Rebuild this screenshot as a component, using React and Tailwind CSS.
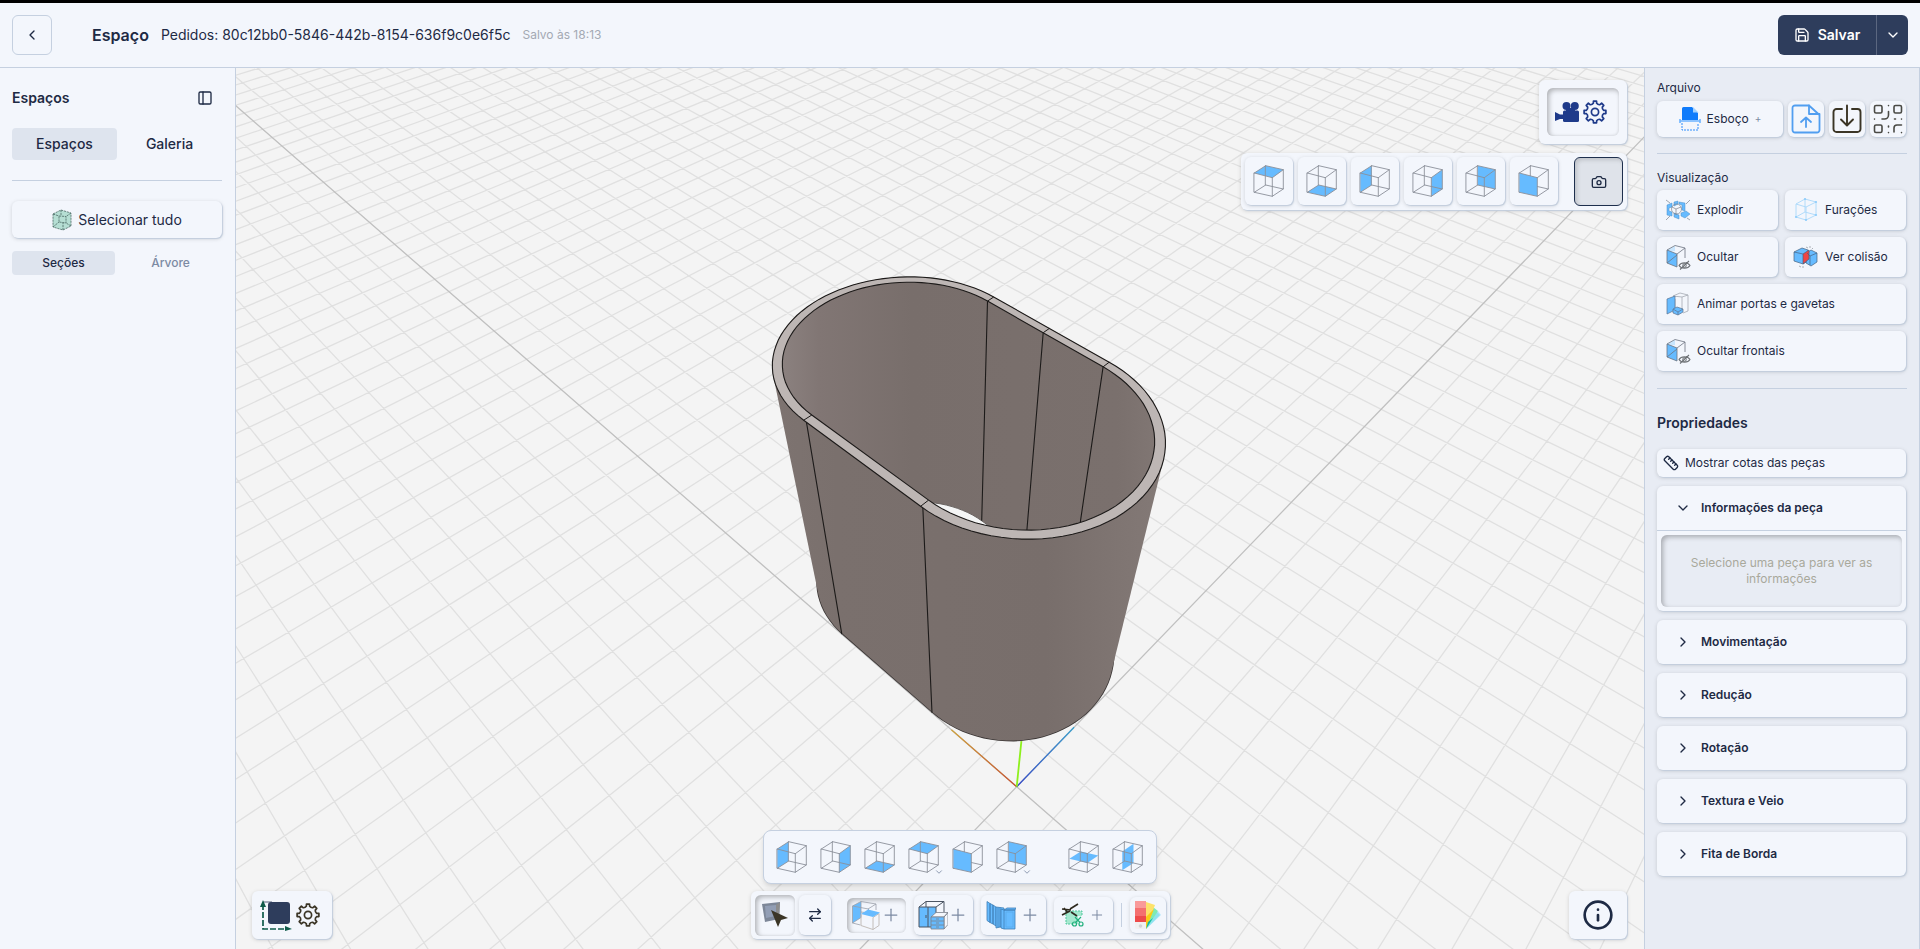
import React from 'react';
import { ArrowRightLeft, Camera, ChevronDown, ChevronLeft, ChevronRight, Info, PanelLeft, Plus, Ruler, Save } from 'lucide-react';

/* ---------- Scene projection ---------- */

// Vanishing points of the two floor axes and of the vertical, plus the world origin
const ORIGIN = [1016.7, 786.7];
const VP_A = [-531, -563];
const VP_B = [2320, -563];
const VP_UP = [960, 1343];
const STEP_A = 0.02317;
const STEP_B = 0.02426;
const STEP_UP = 0.0379;

const weight = (a, b, h = 0) => 1 + a * STEP_A + b * STEP_B - h * STEP_UP;

const project = (a, b, h = 0) => {
  const w = weight(a, b, h);
  return [0, 1].map((i) => (ORIGIN[i] + a * STEP_A * VP_A[i] + b * STEP_B * VP_B[i] - h * STEP_UP * VP_UP[i]) / w);
};

const toPath = (points, close = true) =>
  points.map(([x, y], i) => `${i ? 'L' : 'M'}${x.toFixed(1)} ${y.toFixed(1)}`).join('') + (close ? 'Z' : '');

const gridPath = () => {
  let d = '';
  for (let k = -30; k <= 75; k++) {
    if (k === 0) continue;
    // keep every line in front of the camera
    const startB = Math.max(-45, (0.2 - 1 - k * STEP_A) / STEP_B);
    const startA = Math.max(-45, (0.2 - 1 - k * STEP_B) / STEP_A);
    d += toPath([project(k, startB), project(k, 90)], false);
    d += toPath([project(startA, k), project(90, k)], false);
  }
  return d;
};

const axesPath = toPath([project(-25, 0), project(90, 0)], false) + toPath([project(0, -25), project(0, 90)], false);

// Oblong piece: 8 x 5 floor cells, rounded ends
const HEIGHT = 6.93;
const EDGE = 0.05;
const WALL = 0.14;

const oblong = (inset, h) => {
  const r = 2.5 - inset;
  const points = [];
  for (let i = 0; i <= 48; i++) {
    const t = Math.PI / 2 + (Math.PI * i) / 48;
    points.push(project(2.5 + r * Math.cos(t), 2.5 + r * Math.sin(t), h));
  }
  for (let i = 0; i <= 48; i++) {
    const t = -Math.PI / 2 + (Math.PI * i) / 48;
    points.push(project(5.5 + r * Math.cos(t), 2.5 + r * Math.sin(t), h));
  }
  return points;
};

const hull = (points) => {
  const sorted = [...points].sort((p, q) => p[0] - q[0] || p[1] - q[1]);
  const cross = (o, p, q) => (p[0] - o[0]) * (q[1] - o[1]) - (p[1] - o[1]) * (q[0] - o[0]);
  const half = (list) => {
    const out = [];
    list.forEach((p) => {
      while (out.length > 1 && cross(out[out.length - 2], out[out.length - 1], p) <= 0) out.pop();
      out.push(p);
    });
    return out.slice(0, -1);
  };
  return [...half(sorted), ...half(sorted.reverse())];
};

const outerTop = oblong(-EDGE, HEIGHT);
const outerBottom = oblong(0.02, 0);
const innerTop = toPath(oblong(WALL, HEIGHT));
const innerBottom = toPath(oblong(WALL, 0));
const body = toPath(hull([...outerTop, ...outerBottom]));
const rim = toPath(outerTop) + innerTop;

const seam = (a, b) => toPath([project(a, b, HEIGHT), project(a, b, 0)], false);
const rimSeam = (a, b1, b2) => toPath([project(a, b1, HEIGHT), project(a, b2, HEIGHT)], false);

const Scene = () => (
  <svg className="absolute inset-0 h-full w-full" viewBox="236 68 1408 881" preserveAspectRatio="xMidYMid slice" aria-hidden="true">
    <defs>
      <linearGradient id="outside" gradientUnits="userSpaceOnUse" x1="780" y1="0" x2="1160" y2="0">
        <stop offset="0" stopColor="#7d7370" />
        <stop offset="0.15" stopColor="#7a706d" />
        <stop offset="0.7" stopColor="#786e6b" />
        <stop offset="1" stopColor="#837976" />
      </linearGradient>
      <linearGradient id="inside" gradientUnits="userSpaceOnUse" x1="782" y1="0" x2="1154" y2="0">
        <stop offset="0" stopColor="#8b817f" />
        <stop offset="0.1" stopColor="#817674" />
        <stop offset="0.35" stopColor="#786e6b" />
        <stop offset="0.9" stopColor="#7a706d" />
        <stop offset="1" stopColor="#807673" />
      </linearGradient>
      <linearGradient id="axisX" gradientUnits="userSpaceOnUse" x1="1016" y1="786" x2="948" y2="727">
        <stop offset="0" stopColor="#c8502c" />
        <stop offset="1" stopColor="#cfa63c" />
      </linearGradient>
      <linearGradient id="axisZ" gradientUnits="userSpaceOnUse" x1="1016" y1="786" x2="1077" y2="724">
        <stop offset="0" stopColor="#3448c8" />
        <stop offset="1" stopColor="#3ba6cf" />
      </linearGradient>
      <clipPath id="opening">
        <path d={innerTop} />
      </clipPath>
    </defs>
    <path d={gridPath()} stroke="#e0e0e0" strokeWidth="1.3" fill="none" />
    <path d={axesPath} stroke="#c0c0c0" strokeWidth="1.3" fill="none" />
    <path d={toPath([project(0, 0), project(1.9, 0)], false)} stroke="url(#axisX)" strokeWidth="1.3" />
    <path d={toPath([project(0, 0), project(0, 1.9)], false)} stroke="url(#axisZ)" strokeWidth="1.3" />
    <path d={toPath([project(0, 0), project(0, 0, 2)], false)} stroke="#8df01c" strokeWidth="1.8" />
    <path d={toPath(outerBottom)} stroke="#3a3534" strokeWidth="1.6" fill="none" />
    <path d={body} fill="url(#outside)" />
    <path d={seam(2.5, 0) + seam(5.5, 0)} stroke="#1c1a19" strokeWidth="1.1" />
    <path d={innerTop} fill="url(#inside)" />
    <g clipPath="url(#opening)">
      <path d={innerBottom} fill="#f5f6f6" stroke="#6a6462" />
      <path
        d={seam(2.5, 5 - WALL) + seam(4, 5 - WALL) + seam(5.5, 5 - WALL)}
        stroke="#1c1a19"
        strokeWidth="1.1"
      />
    </g>
    <path d={rim} fill="#bdb6b4" fillRule="evenodd" stroke="#1c1a19" strokeWidth="1.1" />
    <path
      d={
        rimSeam(2.5, -EDGE, WALL) + rimSeam(5.5, -EDGE, WALL) +
        rimSeam(2.5, 5 - WALL, 5 + EDGE) + rimSeam(4, 5 - WALL, 5 + EDGE) + rimSeam(5.5, 5 - WALL, 5 + EDGE)
      }
      stroke="#1c1a19"
    />
  </svg>
);

/* ---------- Icons ---------- */

const gearPath = () => {
  const polar = (r, deg) => {
    const t = (deg * Math.PI) / 180;
    return `${(12 + r * Math.cos(t)).toFixed(2)} ${(12 + r * Math.sin(t)).toFixed(2)}`;
  };
  let d = '';
  for (let i = 0; i < 8; i++) {
    const c = i * 45;
    d += `${i ? 'L' : 'M'}${polar(8.8, c - 11)}L${polar(11, c - 8)}L${polar(11, c + 8)}L${polar(8.8, c + 11)}`;
    d += `Q${polar(7.6, c + 22.5)} ${polar(8.8, c + 34)}`;
  }
  return `${d}Z`;
};

const GearIcon = ({ className }) => (
  <svg viewBox="0 0 24 24" className={className} fill="none" stroke="currentColor" strokeWidth="1.7" strokeLinejoin="round" aria-hidden="true">
    <path d={gearPath()} />
    <circle cx="12" cy="12" r="3.6" />
  </svg>
);

const FACES = {
  top: '1.3,8 12.7,0.7 30.3,4.7 19.3,12.7',
  bottom: '1.3,27.3 12.7,20 30.3,24 19.3,31.3',
  left: '1.3,8 12.7,0.7 12.7,20 1.3,27.3',
  right: '30.3,4.7 19.3,12.7 19.3,31.3 30.3,24',
  back: '12.7,0.7 30.3,4.7 30.3,24 12.7,20',
  front: '1.3,8 19.3,12.7 19.3,31.3 1.3,27.3',
  middle: '1.3,17.7 12.7,10.4 30.3,14.4 19.3,22',
  divider: '10.3,10.4 21.5,2.7 21.5,22 10.3,29.3',
};

const Cube = ({ face }) => (
  <svg viewBox="0 0 32 32" className="h-8 w-8" aria-hidden="true">
    {face !== 'front' && <polygon points={FACES[face]} fill="#66bbff" />}
    <g fill="none" stroke="#8b909a" strokeWidth="0.9" strokeLinejoin="round" strokeLinecap="round">
      <polygon points={FACES.back} />
      <path d="M1.3 8 12.7 .7M19.3 12.7 30.3 4.7M1.3 27.3 12.7 20M19.3 31.3 30.3 24" />
      <polygon points={FACES.front} fill={face === 'front' ? '#66bbff' : 'none'} />
    </g>
  </svg>
);

const GreenCubeIcon = () => (
  <svg viewBox="0 0 20 22" className="h-[22px] w-5" aria-hidden="true">
    <path d="M1 5 9 1l10 3v13l-8 4-10-3z" fill="#b5ded3" />
    <g fill="none" stroke="#4c6b66" strokeWidth="0.8" strokeDasharray="2.2 0.8">
      <path d="M1 5 9 1l10 3v13l-8 4-10-3zM7 7l7 .5v6.500L7 13zM1 5l6 2M19 4l-5 3.500M1 18l6-5M19 17l-5-3M9 1v6M11 21v-7.500" />
    </g>
  </svg>
);

const MovieCameraIcon = () => (
  <svg viewBox="0 0 24 20" className="h-5 w-6" fill="#1e3a8a" aria-hidden="true">
    <circle cx="11.500" cy="4" r="4" />
    <circle cx="19.800" cy="4" r="4" />
    <rect x="8" y="8.500" width="16" height="11.500" rx="1.500" />
    <path d="M0 10 5 12.500h4v4.500H5L0 19zM11 6h9v4h-9z" />
  </svg>
);

const SketchIcon = () => (
  <svg viewBox="0 0 22 26" className="h-[26px] w-[22px]" aria-hidden="true">
    <path d="M3 2.500A1.500 1.500 0 0 1 4.500 1H13l6 6v7H3z" fill="#0f7bfb" />
    <path d="M14 1v5.500h5.500z" fill="#9fd0ff" />
    <path d="M1 15h20M1 13v4M21 13v4" stroke="#6db4ff" strokeWidth="1.600" />
    <path d="M3 17v7h16v-7" fill="none" stroke="#2f8dfc" strokeDasharray="2 1" />
  </svg>
);

const UploadFileIcon = () => (
  <svg viewBox="0 0 30 30" className="h-[30px] w-[30px]" fill="none" stroke="#519ef0" strokeWidth="1.800" strokeLinecap="round" strokeLinejoin="round" aria-hidden="true">
    <path d="M18 1.500H4A2.500 2.500 0 0 0 1.500 4v22A2.500 2.500 0 0 0 4 28.500h22a2.500 2.500 0 0 0 2.500-2.500V11z" />
    <path d="M18 1.500V10h10.500M15 23v-9M10 18l5-4.500 5 4.500" />
  </svg>
);

const DownloadIcon = () => (
  <svg viewBox="0 0 30 30" className="h-[30px] w-[30px]" fill="none" stroke="#3b3526" strokeWidth="1.900" strokeLinecap="round" strokeLinejoin="round" aria-hidden="true">
    <path d="M10 5H4.500A3 3 0 0 0 1.500 8v17a3 3 0 0 0 3 3h21a3 3 0 0 0 3-3V8a3 3 0 0 0-3-3H20" />
    <path d="M15 1.500V21M9 15.500l6 6 6-6" />
  </svg>
);

const QrIcon = () => (
  <svg viewBox="0 0 30 30" className="h-[30px] w-[30px]" fill="none" stroke="#4a4a45" strokeWidth="1.600" strokeLinecap="round" aria-hidden="true">
    <rect x="1.500" y="1.500" width="7.500" height="7.500" rx="1.500" />
    <rect x="21" y="1.500" width="7.500" height="7.500" rx="1.500" />
    <rect x="1.500" y="21" width="7.500" height="7.500" rx="1.500" />
    <path d="M15.500 7.500v3.500a4 4 0 0 1-4 4H9M15.500 1.500v.1M1.500 15v.1M21.500 15h1M28.500 15v.1M15.500 22v1M15.500 28.500v.1M21 28v-4a3 3 0 0 1 3-3h4.500M28.500 28.500v.1" />
  </svg>
);

const ExplodeIcon = () => (
  <svg viewBox="0 0 26 22" className="h-[22px] w-[26px]" aria-hidden="true">
    <g fill="#66bbff" stroke="#4f8fc4" strokeWidth="0.500">
      <path d="M2 6l5-2v4L4 9v3l3 1v4l-5-1zM9 3l4-1v3l-4 2zM14 3l6 1v8l-3-1V6l-3-1zM16 14l5-2 4 3-5 4-4-2z" />
      <path d="M9 14l5 2v4l-5-2z" />
    </g>
    <g fill="none" stroke="#7c838c" strokeWidth="0.700">
      <circle cx="11.500" cy="10" r="5" />
      <path d="M7 8l4 2 5-2M11 10v6M1 1l4 3M25 1l-4 4M1 21l4-4M25 21l-3-2" />
    </g>
  </svg>
);

const HolesIcon = () => (
  <svg viewBox="0 0 26 26" className="h-[26px] w-[26px]" aria-hidden="true">
    <g fill="none" stroke="#a9d8fb" strokeWidth="0.900">
      <path d="M3 7l9-5 11 3v13l-10 5-10-3zM3 7l10 3 10-5M13 10v13M12 2v13M3 20l9-5 11 3" />
    </g>
    <g fill="#8fcdfa">
      <circle cx="12" cy="2" r="1.100" /><circle cx="23" cy="5" r="1.100" /><circle cx="23" cy="18" r="1.100" />
      <circle cx="3" cy="20" r="1.100" /><circle cx="13" cy="23" r="1.100" />
    </g>
  </svg>
);

const HideIcon = () => (
  <svg viewBox="0 0 26 26" className="h-[26px] w-[26px]" fill="none" strokeLinejoin="round" aria-hidden="true">
    <path d="M2 6l8-4v5L2 8z" fill="#c9e6fd" />
    <path d="M2 6l10 4v13L2 19z" fill="#66bbff" />
    <path d="M2 6l8-4.500L20 4l-8 6zM2 6v13l10 4V10M20 4v10M2 19l10-8" stroke="#6c7480" strokeWidth="0.800" />
    <path d="M14 21.500c2-3.500 9-3.500 11 0-2 3.500-9 3.500-11 0zM15 25.500 24 17" stroke="#6e7276" strokeWidth="1.100" />
    <circle cx="19.500" cy="21.500" r="1.800" stroke="#6e7276" />
  </svg>
);

const CollisionIcon = () => (
  <svg viewBox="0 0 26 24" className="h-6 w-[26px]" strokeLinejoin="round" aria-hidden="true">
    <g stroke="#46627f" strokeWidth="0.700">
      <path d="M1 7l8-4 6 2v11l-5 3-9-3z" fill="#66bbff" />
      <path d="M14 8l4-3 6 3v9l-6 4-5-3z" fill="#66bbff" />
      <path d="M10 9l6-4v9l-6 5z" fill="#ef4444" />
      <path d="M1 7l9 2M24 8l-7 3v9M14 8l3 3" fill="none" />
    </g>
    <path d="M13 2l2 1M17 1v2M20 3l-1 1M6 21l2 1M10 21v2" stroke="#9aa0a6" strokeWidth="0.800" />
  </svg>
);

const DoorsIcon = () => (
  <svg viewBox="0 0 26 26" className="h-[26px] w-[26px]" strokeLinejoin="round" aria-hidden="true">
    <g fill="none" stroke="#a4aab3" strokeWidth="0.800">
      <path d="M8 5l7-3 8 2v16l-5 2M8 5l9 1 6-2M17 6v12M10 8v10" />
    </g>
    <g fill="#66bbff" stroke="#5b7390" strokeWidth="0.700">
      <path d="M2 8l8-3v14l-8 4z" />
      <path d="M8 18l4-2 6 2v3l-5 3-5-2z" />
      <path d="M8 18l5 3 5-3M13 21v3" fill="none" />
    </g>
  </svg>
);

const SelectPieceIcon = () => (
  <svg viewBox="0 0 28 28" className="h-7 w-7" aria-hidden="true">
    <path d="M1 3 19 1l-1 17-14 3z" fill="#7d8798" />
    <path d="M4 5l11-1v11L5 17z" fill="#929eb5" />
    <path d="M19 1l-4 3v11l3 3z" fill="#8d8d8d" />
    <path d="M10 9l17 8-7 2-3 7z" fill="#3b3526" />
  </svg>
);

const PanelsIcon = () => (
  <svg viewBox="0 0 30 30" className="h-[30px] w-[30px]" strokeLinejoin="round" aria-hidden="true">
    <path d="M1.500 6 10 1.500v16L1.500 23z" fill="#66bbff" />
    <g fill="none" stroke="#9aa0a9" strokeWidth="0.800">
      <path d="M1.500 6 10 1.500 25 4v6M10 1.500v16L1.500 23V6l16 3v3M25 4l-8 5M1.500 23l8 2M10 12l8 1" />
    </g>
    <path d="M10 14.500v11l12 4V17.500l6-4v12l-6 4" fill="none" stroke="#bdb7b2" strokeWidth="0.900" />
    <path d="M10 14 17 9.500l12 3-7 4.500z" fill="#66bbff" />
  </svg>
);

const CabinetIcon = () => (
  <svg viewBox="0 0 30 30" className="h-[30px] w-[30px]" strokeLinejoin="round" aria-hidden="true">
    <g stroke="#4b5563" strokeWidth="1">
      <path d="M1 7h17v20H1z" fill="#66bbff" />
      <path d="M1 7l7-5.500h18L18 7M26 1.500V12M8 1.500V7M10 7v20" fill="none" />
      <path d="M8 15v3" />
    </g>
    <g stroke="#7b828c" strokeWidth="0.800">
      <path d="M13 17l5-4.500h12L26 17zM26 17l4-4.500v12L26 29z" fill="#f3f6fb" />
      <path d="M13 17h13v12H13z" fill="#66bbff" />
      <path d="M13 21h13M13 25h13M18 19h3M18 23h3M18 27h3" />
    </g>
  </svg>
);

const DoorSetIcon = () => (
  <svg viewBox="0 0 30 30" className="h-[30px] w-[30px]" fill="#66bbff" stroke="#3f7fb5" strokeWidth="0.800" strokeLinejoin="round" aria-hidden="true">
    <path d="M1 1.500 4 3.500v19l-3-2zM4 3.500 7 5v19l-3-1.500zM7 5l3 2v19l-3-2z" />
    <path d="M10 7l8 1v18l-8 2zM12 7.500v20M14 7.500v20" />
    <path d="M18 10l3-2h9l-1 2zM18 10h11v19H18zM18 10l-3-1v19l3 1" />
    <path d="M20 12h7v15h-7z" stroke="#5ba9ea" />
  </svg>
);

const CutIcon = () => (
  <svg viewBox="0 0 24 24" className="h-6 w-6" aria-hidden="true">
    <path d="M5 8h16v5h-4v8H5z" fill="#a5e8cf" />
    <path d="M5 8h16v5M5 8v13h6" fill="none" stroke="#4fc79b" strokeDasharray="2 1" />
    <path d="M1 6l9 1M9 6l8-5M1 12l8-4M10 9l6 4M3 5l3 4" stroke="#2f2a1f" strokeWidth="1.700" fill="none" />
    <g fill="none" stroke="#20b07c" strokeWidth="1.200">
      <circle cx="13.500" cy="21" r="2" /><circle cx="20" cy="21" r="2" />
      <path d="M14.500 19.500 20 14M19 19.500 14 14" />
    </g>
  </svg>
);

const PaletteIcon = () => (
  <svg viewBox="0 0 28 30" className="h-[30px] w-7" aria-hidden="true">
    <path d="M12 29 27 15l-3-4z" fill="#b8e6fb" />
    <path d="M12 29 26 15l-5-5z" fill="#8fe3ee" />
    <path d="M12 29 24 11l-5-4z" fill="#7eeab4" />
    <path d="M12 29V2l9 3z" fill="#fde26a" />
    <path d="M12 29 20 9l-8 8z" fill="#facc15" />
    <path d="M12 29l7-11-5 4z" fill="#12b8a6" />
    <path d="M1 1h11v7H1z" fill="#f99a9a" />
    <path d="M1 8h11v8H1z" fill="#f47070" />
    <path d="M1 16h11v6H1z" fill="#ee4b4b" />
    <path d="M1 22h11v7H3a2 2 0 0 1-2-2z" fill="#f1f1f1" />
    <circle cx="6.500" cy="26" r="1.800" fill="#d4d4d4" />
  </svg>
);

const AxesIcon = () => (
  <svg viewBox="0 0 32 32" className="h-8 w-8" aria-hidden="true">
    <rect x="8" y="3" width="22" height="22" rx="3" fill="#2e3d5c" />
    <path d="M3 5v25h23" fill="none" stroke="#0f5b4a" strokeWidth="1.700" strokeDasharray="6 2" />
    <path d="M3 3h9" stroke="#2e3d5c" strokeWidth="0.800" />
    <path d="M0 8l3-7 3 7zM25 27l7 3-7 2z" fill="#0f5b4a" />
  </svg>
);

/* ---------- Shared styles ---------- */

const raised = 'rounded-md bg-[#f3f6fc] shadow-[1px_1px_1px_#c3cedd,0_1px_4px_rgba(0,0,0,0.15)]';
const pressed = 'rounded-md bg-[#f3f6fc] shadow-[inset_2px_2px_5px_rgba(0,0,0,0.28),inset_-1px_-1px_2px_rgba(0,0,0,0.04)]';

const VIEWS = [
  ['top', 'Vista superior'],
  ['bottom', 'Vista inferior'],
  ['left', 'Vista esquerda'],
  ['right', 'Vista direita'],
  ['back', 'Vista traseira'],
  ['front', 'Vista frontal'],
];

const PANELS = [
  { face: 'left', label: 'Lateral esquerda' },
  { face: 'right', label: 'Lateral direita' },
  { face: 'bottom', label: 'Base' },
  { face: 'top', label: 'Tampo', menu: true },
  { face: 'front', label: 'Frente' },
  { face: 'back', label: 'Fundo', menu: true },
];

const SECTIONS = ['Movimentação', 'Redução', 'Rotação', 'Textura e Veio', 'Fita de Borda'];

const Header = () => (
  <header className="flex h-[68px] shrink-0 items-center border-t-[3px] border-b border-t-black border-b-[#c5d0e0] bg-[#f3f6fc] px-3">
    <button aria-label="Voltar" className="flex h-10 w-10 items-center justify-center rounded-md border border-[#c5d0e0]">
      <ChevronLeft size={16} />
    </button>
    <h1 className="ml-10 text-base font-semibold">Espaço</h1>
    <p className="ml-3 text-sm">Pedidos: 80c12bb0-5846-442b-8154-636f9c0e6f5c</p>
    <span className="ml-3 text-xs text-[#a3a9b3]">Salvo às 18:13</span>
    <div className="ml-auto flex h-10 overflow-hidden rounded-md bg-[#2e3d5c] text-white">
      <button className="flex w-[98px] items-center justify-center gap-2 text-sm font-semibold">
        <Save size={16} /> Salvar
      </button>
      <button aria-label="Mais opções" className="flex w-8 items-center justify-center border-l border-[#5b6780]">
        <ChevronDown size={16} />
      </button>
    </div>
  </header>
);

const LeftPanel = () => (
  <aside className="w-[236px] shrink-0 border-r border-[#c5d0e0] bg-[#f3f6fc] py-3 pr-[13px] pl-3">
    <div className="flex h-9 items-center justify-between pr-[9px]">
      <h2 className="text-sm font-semibold">Espaços</h2>
      <button aria-label="Recolher painel"><PanelLeft size={16} /></button>
    </div>
    <div className="mt-3 grid h-8 grid-cols-2 text-sm font-medium">
      <button className="rounded-sm bg-[#dee4ee]">Espaços</button>
      <button>Galeria</button>
    </div>
    <hr className="mt-5 border-[#c5d0e0]" />
    <button className={`${raised} mt-5 flex h-[37px] w-full items-center justify-center gap-1.5 text-sm`}>
      <GreenCubeIcon /> Selecionar tudo
    </button>
    <div className="mt-[13px] grid h-6 grid-cols-2 gap-1 text-xs font-medium">
      <button className="rounded-sm bg-[#dee4ee]">Seções</button>
      <button className="text-[#7c8aa3]">Árvore</button>
    </div>
  </aside>
);

const Viewport = () => (
  <main className="relative min-w-0 flex-1 overflow-hidden bg-[#f4f4f4]">
    <Scene />

    <div className="absolute top-3 right-[17px] flex flex-col items-end gap-[9px]">
      <div className={`${raised} p-2`}>
        <button aria-label="Configurar câmera" className={`${pressed} flex h-12 w-[72px] items-center gap-1 pl-2 text-[#1e3a8a]`}>
          <MovieCameraIcon />
          <GearIcon className="h-6 w-6" />
        </button>
      </div>
      <div className={`${raised} flex items-start gap-[5px] p-1`}>
        {VIEWS.map(([face, label]) => (
          <button key={face} aria-label={label} className={`${raised} flex h-12 w-12 items-center justify-center`}>
            <Cube face={face} />
          </button>
        ))}
        <button aria-label="Capturar imagem" className="ml-[11px] flex h-[49px] w-[49px] items-center justify-center rounded-md border border-[#1e2f4d] bg-[#dfe3ea] shadow-[inset_2px_2px_4px_rgba(0,0,0,0.15)]">
          <Camera size={16} />
        </button>
      </div>
    </div>

    <div className={`${raised} absolute bottom-2.5 left-4 flex h-12 items-center gap-1 pr-3 pl-2`}>
      <button aria-label="Eixos"><AxesIcon /></button>
      <button aria-label="Configurar eixos" className="text-[#3b3526]"><GearIcon className="h-6 w-6" /></button>
    </div>

    {/* centred on the window, the right panel is 40px wider than the left one */}
    <div className="absolute inset-x-0 bottom-2.5 flex flex-col items-center gap-[7px] pl-10">
      <div className="flex h-[54px] items-center gap-3 rounded-lg border border-[#c5d0e0] bg-[#f3f6fc] px-3 shadow-md">
        {PANELS.map(({ face, label, menu }) => (
          <button key={face} aria-label={label} className="relative">
            <Cube face={face} />
            {menu && <ChevronDown size={10} className="absolute -right-1 -bottom-1 text-[#7c8aa3]" />}
          </button>
        ))}
        <button aria-label="Prateleira" className="ml-7"><Cube face="middle" /></button>
        <button aria-label="Divisória"><Cube face="divider" /></button>
      </div>
      <div className={`${raised} flex h-12 items-center px-1`}>
        <button aria-label="Selecionar peça" className={`${pressed} flex h-[41px] w-10 items-center justify-center`}>
          <SelectPieceIcon />
        </button>
        <button aria-label="Alternar" className={`${raised} ml-1 flex h-10 w-8 items-center justify-center`}>
          <ArrowRightLeft size={16} />
        </button>
        <button aria-label="Adicionar painel" className={`${pressed} ml-4 flex h-[35px] w-[59px] items-center justify-center`}>
          <PanelsIcon /><Plus size={20} strokeWidth={1.5} className="text-[#7c8aa3]" />
        </button>
        <button aria-label="Adicionar módulo" className={`${raised} ml-2 flex h-10 w-[59px] items-center justify-center`}>
          <CabinetIcon /><Plus size={20} strokeWidth={1.5} className="text-[#7c8aa3]" />
        </button>
        <button aria-label="Adicionar porta" className={`${raised} ml-2 flex h-10 w-[65px] items-center justify-center gap-1`}>
          <DoorSetIcon /><Plus size={20} strokeWidth={1.5} className="text-[#7c8aa3]" />
        </button>
        <button aria-label="Adicionar recorte" className={`${raised} ml-2 flex h-9 w-[59px] items-center justify-center gap-1`}>
          <CutIcon /><Plus size={16} strokeWidth={1.5} className="text-[#7c8aa3]" />
        </button>
        <span className="mx-2 h-6 w-px bg-[#c5d0e0]" />
        <button aria-label="Materiais" className={`${raised} flex h-9 w-9 items-center justify-center`}>
          <PaletteIcon />
        </button>
      </div>
    </div>

    <button aria-label="Informações" className={`${raised} absolute right-[17px] bottom-2.5 flex h-12 w-[58px] items-center justify-center`}>
      <Info size={32} />
    </button>
  </main>
);

const ToolButton = ({ icon, children, className = '' }) => (
  <button className={`${raised} flex h-10 items-center gap-1.5 px-2 ${className}`}>
    <span className="flex w-[26px] justify-center">{icon}</span>
    {children}
  </button>
);

const RightPanel = () => (
  <aside className="w-[276px] shrink-0 border-x border-[#c5d0e0] bg-[#e8ecf4] px-3 pt-3 text-xs">
    <h3 className="leading-4">Arquivo</h3>
    <div className="mt-[5px] flex gap-[5px] pr-px">
      <button className={`${raised} flex h-9 flex-1 items-center justify-center gap-1.5`}>
        <SketchIcon /> Esboço <span className="text-[10px] text-[#7c8aa3]">+</span>
      </button>
      <button aria-label="Importar arquivo" className={`${raised} flex h-9 w-9 items-center justify-center`}><UploadFileIcon /></button>
      <button aria-label="Baixar" className={`${raised} flex h-9 w-9 items-center justify-center`}><DownloadIcon /></button>
      <button aria-label="Código QR" className={`${raised} flex h-9 w-9 items-center justify-center`}><QrIcon /></button>
    </div>
    <hr className="mt-4 border-[#c5d0e0]" />

    <h3 className="mt-4 leading-4">Visualização</h3>
    <div className="mt-1 grid grid-cols-2 gap-[7px] pr-px">
      <ToolButton icon={<ExplodeIcon />}>Explodir</ToolButton>
      <ToolButton icon={<HolesIcon />}>Furações</ToolButton>
      <ToolButton icon={<HideIcon />}>Ocultar</ToolButton>
      <ToolButton icon={<CollisionIcon />}>Ver colisão</ToolButton>
      <ToolButton icon={<DoorsIcon />} className="col-span-2">Animar portas e gavetas</ToolButton>
      <ToolButton icon={<HideIcon />} className="col-span-2">Ocultar frontais</ToolButton>
    </div>
    <hr className="mt-[17px] border-[#c5d0e0]" />

    <h2 className="mt-6 text-sm font-semibold">Propriedades</h2>
    <div className="mt-4 flex flex-col gap-[9px] pr-px">
      <button className={`${raised} flex h-7 w-full items-center gap-1.5 px-1.5`}>
        <Ruler size={16} /> Mostrar cotas das peças
      </button>
      <section className={raised}>
        <button aria-expanded="true" className="flex h-11 w-full items-center gap-2.5 pl-[18px] font-semibold">
          <ChevronDown size={16} /> Informações da peça
        </button>
        <div className="border-t border-[#c5d0e0] p-1">
          <p className="flex h-[72px] items-center justify-center rounded-md bg-[#e8ecf4] px-6 text-center leading-4 text-[#a9a99c] shadow-[inset_2px_2px_5px_rgba(0,0,0,0.28)]">
            Selecione uma peça para ver as informações
          </p>
        </div>
      </section>
      {SECTIONS.map((title) => (
        <button key={title} aria-expanded="false" className={`${raised} flex h-11 w-full items-center gap-2.5 pl-[18px] font-semibold`}>
          <ChevronRight size={16} /> {title}
        </button>
      ))}
    </div>
  </aside>
);

const App = () => {
  return (
    <div className="flex h-screen flex-col overflow-hidden font-['Inter',sans-serif] text-[#1e2a44]">
      <Header />
      <div className="flex min-h-0 flex-1">
        <LeftPanel />
        <Viewport />
        <RightPanel />
      </div>
    </div>
  );
};

export default App;
